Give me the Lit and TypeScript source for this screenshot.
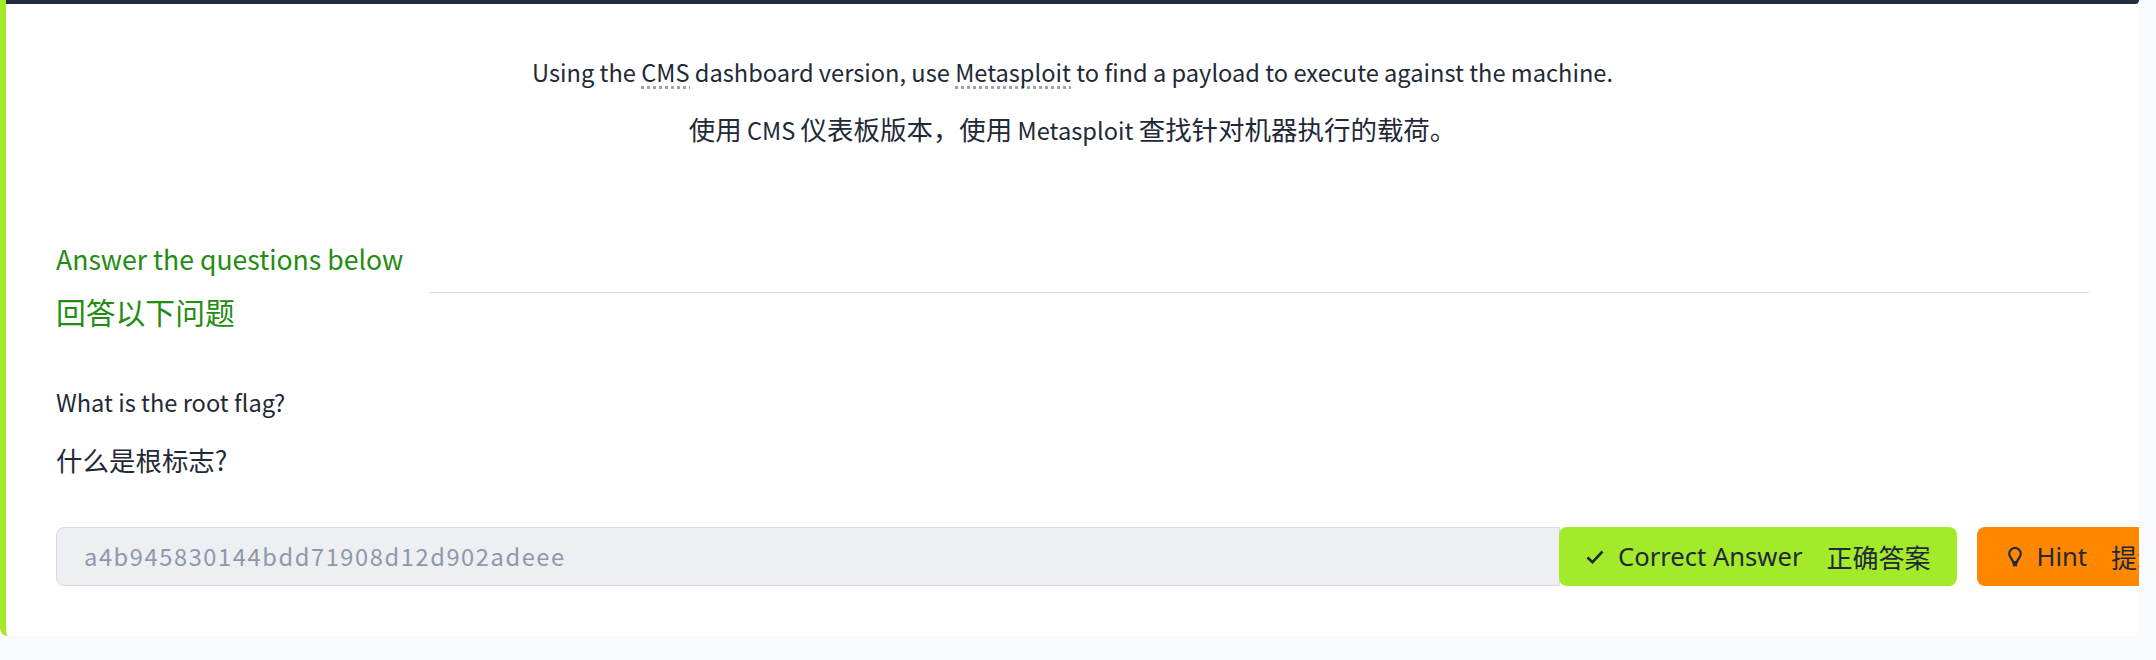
import { LitElement, html, css } from 'lit';
import { customElement } from 'lit/decorators.js';

@customElement('app-root')
export class AppRoot extends LitElement {
  static styles = css`
    :host {
      display: block;
      height: 660px;
      background: #f9fafb;
      font-family: 'Noto Sans CJK SC', sans-serif;
      color: #1f2937;
      overflow: hidden;
    }
    .card {
      box-sizing: border-box;
      width: 2139px;
      height: 636px;
      background: #fff;
      border-left: 6px solid #a3ea2a;
      border-radius: 0 0 8px 8px;
      overflow: hidden;
    }
    .topbar {
      height: 4px;
      margin-left: -6px;
      background: #212c42;
      border-radius: 0 0 8px 8px;
    }
    .body {
      padding: 0 50px 0 50px;
    }
    .zh {
      font-size: 1.12em;
    }
    .task {
      padding-top: 50px;
      text-align: center;
      font-size: 23.64px;
      line-height: 36px;
    }
    .task p {
      margin: 0 0 21px;
    }
    .question p {
      margin: 0 0 22px;
    }
    abbr {
      padding-bottom: 2px;
      background: repeating-linear-gradient(90deg, #a3a3a3 0 3px, transparent 3px 6px) 0 31px / 100% 3px no-repeat;
    }
    .heading {
      display: flex;
      align-items: center;
      gap: 26px;
      margin-top: 90px;
      color: #248c12;
      font-size: 26.6px;
      line-height: 42px;
    }
    .heading-text div + div {
      margin-top: 10px;
    }
    .rule {
      flex: 1;
      height: 1px;
      margin-top: 14px;
      background: #d5dae3;
    }
    .question {
      margin-top: 52px;
      font-size: 23.64px;
      line-height: 36px;
    }
    .answer {
      display: flex;
      margin-top: 48px;
    }
    .field {
      box-sizing: border-box;
      width: 1504px;
      height: 59px;
      margin-right: -1px;
      padding-left: 27px;
      flex: none;
      background: #edeff3;
      border: 1px solid #d5dae3;
      border-radius: 8px 0 0 8px;
      color: #8f98ab;
      font-size: 23.64px;
      letter-spacing: 1.6px;
      line-height: 57px;
    }
    .btn {
      display: flex;
      align-items: center;
      flex: none;
      height: 59px;
      padding: 0 27px;
      border-radius: 8px;
      font-family: 'Noto Sans', 'Noto Sans CJK SC', sans-serif;
      font-size: 25.6px;
      white-space: nowrap;
    }
    .btn svg {
      margin-right: 14px;
    }
    .btn span + span {
      margin-left: 24px;
      font-size: 26px;
    }
    .correct {
      background: #a3ea2a;
    }
    .hint {
      margin-left: 20px;
      padding-left: 31px;
      background: #ff8800;
    }
    svg {
      flex: none;
      fill: none;
      stroke: #1f2937;
    }
  `;

  render() {
    return html`
      <div class="card">
        <div class="topbar"></div>
        <div class="body">
          <div class="task">
            <p>Using the <abbr>CMS</abbr> dashboard version, use <abbr>Metasploit</abbr> to find a payload to execute against the machine.</p>
            <p><span class="zh">使用</span> CMS <span class="zh">仪表板版本，使用</span> Metasploit <span class="zh">查找针对机器执行的载荷。</span></p>
          </div>
          <div class="heading">
            <div class="heading-text">
              <div>Answer the questions below</div>
              <div class="zh">回答以下问题</div>
            </div>
            <div class="rule"></div>
          </div>
          <div class="question">
            <p>What is the root flag?</p>
            <p><span class="zh">什么是根标志?</span></p>
          </div>
          <div class="answer">
            <div class="field">a4b945830144bdd71908d12d902adeee</div>
            <div class="btn correct">
              <svg width="18" height="14" viewBox="0 0 18 14" stroke-width="2.6"><path d="M1.500 7.500 6.500 12.200 16.500 1.500" /></svg>
              <span>Correct Answer</span><span>正确答案</span>
            </div>
            <div class="btn hint">
              <svg width="14" height="20" viewBox="0 0 14 20" stroke-width="2.2">
                <path d="M5 15C4.600 12 1.200 10.500 1.200 6.800a5.800 5.800 0 0 1 11.600 0C12.800 10.500 9.400 12 9 15z" />
                <path d="M4.800 17.500h4.400" stroke-width="3.600" />
              </svg>
              <span>Hint</span><span>提示</span>
            </div>
          </div>
        </div>
      </div>
    `;
  }
}
